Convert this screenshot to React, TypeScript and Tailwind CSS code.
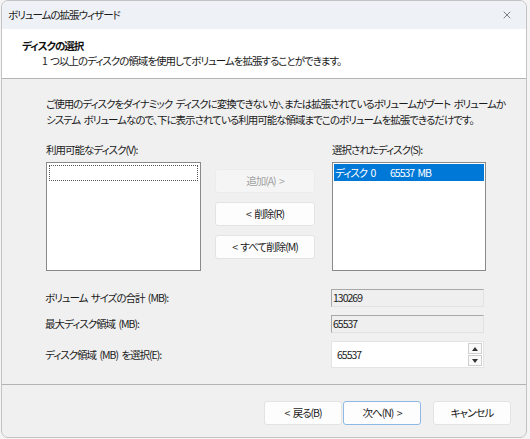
import { X } from "lucide-react";

const jp = "font-['Noto_Sans_CJK_JP','Noto_Sans',sans-serif] [font-feature-settings:'palt'] tracking-[-1px] [word-spacing:2px] whitespace-nowrap";

function Btn({ label, disabled, focused, w = "w-[100px]" }: { label: string; disabled?: boolean; focused?: boolean; w?: string }) {
  const base = "h-[24px] rounded-[3px] flex items-center justify-center border";
  if (disabled) return <div className={`${base} ${w} bg-[#f5f5f5] border-[#ececec] text-[#a3a3a3]`}>{label}</div>;
  if (focused) return <div className={`${base} ${w} bg-[#fdfdfd] border-[#8fb8e4] text-[#1b1b1b]`}>{label}</div>;
  return <div className={`${base} ${w} bg-[#fdfdfd] border-[#e3e3e3] text-[#1b1b1b]`}>{label}</div>;
}

function ReadField({ value }: { value: string }) {
  return (
    <div className="w-[153px] h-[18px] bg-[#efefef] border-t border-l border-[#a8a8a8] border-r border-b border-r-[#e2e2e2] border-b-[#e2e2e2] pl-[1px] leading-[16px] text-[#1b1b1b]">
      {value}
    </div>
  );
}

export default function App() {
  return (
    <div className={`w-[530px] h-[439px] bg-[#f4f4f4] pl-[1px] text-[10.5px] ${jp}`}>
      <div className="w-[526px] h-[438px] rounded-[7px] border border-[#c4c4c4] bg-[#f0f0f0] overflow-hidden flex flex-col">
        <div className="h-[28px] bg-[#eef1f6] flex items-center justify-between pl-[6px] pr-[13px]">
          <span className="text-[#1b1b1b]">ボリュームの拡張ウィザード</span>
          <X size={12} strokeWidth={1.2} className="text-[#333]" />
        </div>
        <div className="h-[50px] bg-white border-b border-[#b4b4b4] pl-[20px] pt-[9px]">
          <div className="font-bold leading-[15px] text-[#111]">ディスクの選択</div>
          <div className="leading-[15px] pl-[20px] text-[#1b1b1b]">1 つ以上のディスクの領域を使用してボリュームを拡張することができます。</div>
        </div>
        <div className="flex-1 pl-[44px] pt-[17px] text-[#1b1b1b] border-b border-[#b4b4b4]">
          <div className="leading-[15.5px]">
            <div>ご使用のディスクをダイナミック ディスクに変換できないか、または拡張されているボリュームがブート ボリュームか</div>
            <div>システム ボリュームなので、下に表示されている利用可能な領域までこのボリュームを拡張できるだけです。</div>
          </div>
          <div className="flex mt-[15px]">
            <div className="w-[155px]">
              <div className="leading-[16px] h-[20px]">利用可能なディスク(V):</div>
              <div className="h-[109px] bg-white border border-[#8a8a8a] p-[2px]">
                <div className="h-[16px] border border-dotted border-[#555]" />
              </div>
            </div>
            <div className="ml-[14px] pt-[27px] flex flex-col gap-[9px]">
              <Btn label="追加(A) >" disabled />
              <Btn label="< 削除(R)" />
              <Btn label="< すべて削除(M)" />
            </div>
            <div className="ml-[17px] w-[154px]">
              <div className="leading-[16px] h-[20px]">選択されたディスク(S):</div>
              <div className="h-[109px] bg-white border border-[#8a8a8a] p-[1px]">
                <div className="h-[17px] bg-[#0078d7] text-white leading-[17px] pl-[1px] flex">
                  <span className="w-[55px]">ディスク 0</span>
                  <span>65537 MB</span>
                </div>
              </div>
            </div>
          </div>
          <div className="mt-[18px] flex flex-col gap-[8px]">
            <div className="flex items-center">
              <div className="w-[286px] -ml-[1px]">ボリューム サイズの合計 (MB):</div>
              <ReadField value="130269" />
            </div>
            <div className="flex items-center">
              <div className="w-[286px] -ml-[1px]">最大ディスク領域 (MB):</div>
              <ReadField value="65537" />
            </div>
            <div className="flex items-center">
              <div className="w-[286px] -ml-[1px]">ディスク領域 (MB) を選択(E):</div>
              <div className="w-[153px] h-[27px] bg-white border border-[#e4e4e4] flex items-center justify-between pl-[5px] pr-[1px]">
                <span>65537</span>
                <div className="flex flex-col gap-[1px]">
                  <div className="w-[14px] h-[11px] border border-[#cfcfcf] bg-[#fafafa] flex items-center justify-center">
                    <svg width="6" height="4" viewBox="0 0 6 4"><path d="M0 4 L3 0 L6 4 Z" fill="#333" /></svg>
                  </div>
                  <div className="w-[14px] h-[11px] border border-[#cfcfcf] bg-[#fafafa] flex items-center justify-center">
                    <svg width="6" height="4" viewBox="0 0 6 4"><path d="M0 0 L3 4 L6 0 Z" fill="#333" /></svg>
                  </div>
                </div>
              </div>
            </div>
          </div>
        </div>
        <div className="h-[52px] flex items-start justify-end pt-[16px] pr-[15px]">
          <Btn label="< 戻る(B)" w="w-[78px]" />
          <div className="ml-[1px]"><Btn label="次へ(N) >" focused w="w-[78px]" /></div>
          <div className="ml-[12px]"><Btn label="キャンセル" w="w-[78px]" /></div>
        </div>
      </div>
    </div>
  );
}
